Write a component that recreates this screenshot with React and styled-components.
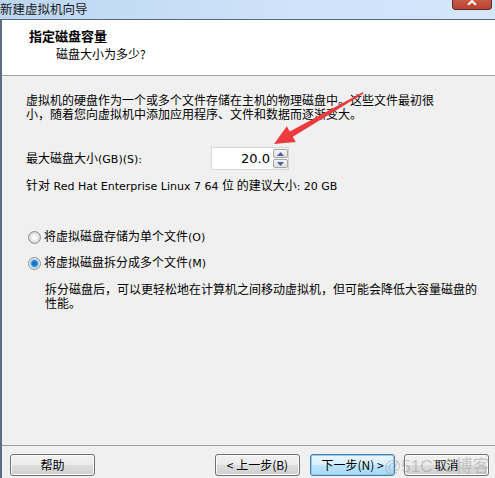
import React from "react";
import styled, { createGlobalStyle } from "styled-components";

const Global = createGlobalStyle`
  html, body { margin: 0; padding: 0; background: #f0f0f0; }
  #root { width: 495px; height: 478px; overflow: hidden; }
`;

const FONT = `"Noto Sans CJK SC", "DejaVu Sans", sans-serif`;
const LATIN = `"DejaVu Sans", "Noto Sans CJK SC", sans-serif`;

const Window = styled.div`
  position: relative;
  width: 495px;
  height: 478px;
  display: flex;
  flex-direction: column;
  background: #f0f0f0;
  font-family: ${FONT};
  font-size: 12px;
  color: #000;
`;

const TitleBar = styled.div`
  height: 20px;
  display: flex;
  align-items: flex-start;
  background: linear-gradient(90deg, #bcd6f2 0%, #cfe3f9 60%, #d3e6fa 100%);
  border-bottom: 1px solid #56687c;
  box-sizing: border-box;
`;

const TitleText = styled.div`
  font-size: 12.5px;
  line-height: 17px;
  color: #1a1a1a;
`;

const CloseBtn = styled.div`
  margin-left: auto;
  margin-right: 3px;
  width: 40px;
  height: 10px;
  border: 1px solid #5e2a22;
  border-top: none;
  border-radius: 0 0 4px 4px;
  background: linear-gradient(180deg, #c75a48 0%, #b8412e 100%);
  display: flex;
  justify-content: center;
  align-items: flex-start;
  box-sizing: border-box;
`;

const Frame = styled.div`
  flex: 1;
  display: flex;
  flex-direction: column;
  border-left: 2px solid #5a6e84;
`;

const Header = styled.div`
  height: 56px;
  background: #fff;
  border-bottom: 1px solid #a0a0a0;
  padding: 8px 0 0 27px;
  box-sizing: border-box;
`;

const HeaderTitle = styled.div`
  font-weight: bold;
  font-size: 13px;
  line-height: 16px;
`;

const HeaderSub = styled.div`
  padding-left: 27px;
  line-height: 16px;
  margin-top: 2px;
`;

const Body = styled.div`
  flex: 1;
  padding: 17px 0 0 24px;
  display: flex;
  flex-direction: column;
`;

const Para = styled.p`
  margin: 0;
  width: 420px;
  line-height: 14px;
`;

const SizeRow = styled.div`
  display: flex;
  align-items: center;
  margin-top: 26px;
  height: 23px;
`;

const Label = styled.div`
  width: 185px;
  line-height: 14px;
`;

const Spin = styled.div`
  display: flex;
  height: 23px;
`;

const NumBox = styled.div`
  width: 62px;
  height: 23px;
  box-sizing: border-box;
  background: #fff;
  border: 1px solid #d6d6d6;
  border-right: none;
  text-align: right;
  padding-right: 3px;
  font-family: ${LATIN};
  font-size: 13px;
  line-height: 21px;
`;

const SpinCol = styled.div`
  display: flex;
  flex-direction: column;
  gap: 1px;
  padding: 1px 0;
  border: 1px solid #d6d6d6;
  border-left: none;
  width: 16px;
  box-sizing: border-box;
`;

const SpinBtn = styled.div`
  flex: 1;
  border: 1px solid #a8a8a8;
  border-radius: 2px;
  background: linear-gradient(180deg, #f6f6f6, #dedede);
  display: flex;
  align-items: center;
  justify-content: center;
`;

const Hint = styled.div`
  margin-top: 8px;
  line-height: 14px;
  font-family: ${LATIN};
  font-size: 11px;
  & > span { font-family: ${FONT}; font-size: 12px; }
`;

const Radios = styled.div`
  margin-top: 35px;
  display: flex;
  flex-direction: column;
  gap: 10px;
  padding-left: 2px;
`;

const RadioRow = styled.div`
  display: flex;
  align-items: center;
  gap: 3px;
  line-height: 14px;
`;

const RadioDot = styled.span`
  width: 11px;
  height: 11px;
  border-radius: 50%;
  border: 1px solid #8e8f8f;
  background: ${(p) =>
    p.$on
      ? "radial-gradient(circle, #1a6fc6 0 2px, #3f9be0 3px, #8fd0f5 4px, #e8e8e8 5px)"
      : "radial-gradient(circle, #f8f8f8 0 2px, #d8d8d8 5px)"};
  flex: none;
`;

const Latin = styled.span`
  font-family: ${LATIN};
  font-size: 11px;
`;

const Desc = styled.p`
  margin: 11px 0 0 19px;
  width: 440px;
  line-height: 14px;
`;

const Footer = styled.div`
  border-top: 1px solid #a0a0a0;
  height: 33px;
  box-sizing: border-box;
  padding: 8px 4px 0 8px;
  display: flex;
  align-items: flex-start;
`;

const Btn = styled.button`
  width: 85px;
  height: 22px;
  box-sizing: border-box;
  border: 1px solid ${(p) => (p.$primary ? "#3c7fb1" : "#707070")};
  border-radius: 3px;
  background: ${(p) =>
    p.$primary
      ? "linear-gradient(180deg, #eaf6fd 0%, #d9f0fc 50%, #bee6fd 51%, #a7d9f5 100%)"
      : "linear-gradient(180deg, #f2f2f2 0%, #ebebeb 50%, #dddddd 51%, #cfcfcf 100%)"};
  box-shadow: ${(p) => (p.$primary ? "inset 0 0 0 1px #93c9eb" : "inset 0 0 0 1px #fcfcfc")};
  font-family: ${FONT};
  font-size: 12px;
  color: #000;
  padding: 0;
  margin-left: ${(p) => p.$gap || 0}px;
  line-height: 18px;
`;

const Arrow = styled.svg`
  position: absolute;
  left: 0;
  top: 0;
  pointer-events: none;
`;

const Watermark = styled.div`
  position: absolute;
  left: 384px;
  top: 452px;
  font-family: "Liberation Sans", "Noto Sans CJK SC", sans-serif;
  font-size: 17px;
  color: rgba(160, 160, 160, 0.55);
  pointer-events: none;
`;

export default function App() {
  return (
    <>
      <Global />
      <Window>
        <TitleBar>
          <TitleText>新建虚拟机向导</TitleText>
          <CloseBtn>
            <svg width="12" height="5" viewBox="0 0 12 5">
              <path d="M2 5 L6 1 L10 5" stroke="#fff" strokeWidth="2" fill="none" />
            </svg>
          </CloseBtn>
        </TitleBar>
        <Frame>
          <Header>
            <HeaderTitle>指定磁盘容量</HeaderTitle>
            <HeaderSub>磁盘大小为多少?</HeaderSub>
          </Header>
          <Body>
            <Para>
              虚拟机的硬盘作为一个或多个文件存储在主机的物理磁盘中。这些文件最初很小，随着您向虚拟机中添加应用程序、文件和数据而逐渐变大。
            </Para>
            <SizeRow>
              <Label>
                最大磁盘大小<Latin>(GB)(S):</Latin>
              </Label>
              <Spin>
                <NumBox>20.0</NumBox>
                <SpinCol>
                  <SpinBtn>
                    <svg width="7" height="4" viewBox="0 0 7 4">
                      <path d="M0 4 L3.5 0 L7 4 Z" fill="#4a5f9c" />
                    </svg>
                  </SpinBtn>
                  <SpinBtn>
                    <svg width="7" height="4" viewBox="0 0 7 4">
                      <path d="M0 0 L3.5 4 L7 0 Z" fill="#4a5f9c" />
                    </svg>
                  </SpinBtn>
                </SpinCol>
              </Spin>
            </SizeRow>
            <Hint>
              <span>针对</span> Red Hat Enterprise Linux 7 64 <span>位 的建议大小</span>: 20 GB
            </Hint>
            <Radios>
              <RadioRow>
                <RadioDot />
                <span>
                  将虚拟磁盘存储为单个文件<Latin>(O)</Latin>
                </span>
              </RadioRow>
              <RadioRow>
                <RadioDot $on />
                <span>
                  将虚拟磁盘拆分成多个文件<Latin>(M)</Latin>
                </span>
              </RadioRow>
            </Radios>
            <Desc>
              拆分磁盘后，可以更轻松地在计算机之间移动虚拟机，但可能会降低大容量磁盘的性能。
            </Desc>
          </Body>
          <Footer>
            <Btn>帮助</Btn>
            <Btn $gap={120}>&lt; 上一步(B)</Btn>
            <Btn $gap={10} $primary>
              下一步(N) &gt;
            </Btn>
            <Btn $gap={9}>取消</Btn>
          </Footer>
        </Frame>
        <Arrow width="495" height="478">
          <polygon
            points="363,92 363.6,93.6 292.8,136.7 295.8,141.9 274,144 286.8,126.3 289.8,131.5"
            fill="#ec3b3f"
          />
        </Arrow>
        <Watermark>@51CTO博客</Watermark>
      </Window>
    </>
  );
}
